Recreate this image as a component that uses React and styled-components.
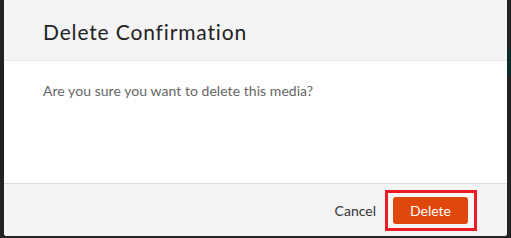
import React from "react";
import styled, { createGlobalStyle } from "styled-components";

const GlobalStyle = createGlobalStyle`
  html, body {
    margin: 0;
    padding: 0;
    background: #222222;
  }
  body {
    font-family: Lato, "Open Sans", sans-serif;
  }
`;

const Backdrop = styled.div`
  width: 511px;
  height: 238px;
  padding: 0 4px 2px 4px;
  box-sizing: border-box;
  background:
    linear-gradient(#0f2a2a, #0f2a2a) right 0 top 49px / 4px 26px no-repeat,
    #222222;
`;

const Modal = styled.div`
  display: flex;
  flex-direction: column;
  height: 236px;
  background: #ffffff;
  border-radius: 0 0 3px 3px;
  overflow: hidden;
`;

const Header = styled.div`
  display: flex;
  align-items: center;
  height: 60px;
  padding: 0 39px;
  background: #f4f4f4;
  border-bottom: 1px solid #e6e6e6;
  flex-shrink: 0;
`;

const Title = styled.h2`
  margin: 2px 0 0;
  font-size: 21px;
  font-weight: 400;
  color: #222222;
  letter-spacing: 0.85px;
`;

const Body = styled.div`
  flex: 1;
  padding: 21px 39px 0;
`;

const Message = styled.p`
  margin: 0;
  font-size: 14px;
  color: #666666;
  letter-spacing: 0.05px;
`;

const Footer = styled.div`
  display: flex;
  align-items: center;
  justify-content: flex-end;
  gap: 9px;
  height: 52px;
  padding: 0 30px 0 0;
  background: #f4f4f4;
  border-top: 1px solid #dcdcdc;
  flex-shrink: 0;
`;

const TextButton = styled.button`
  border: none;
  background: none;
  padding: 0;
  font-family: inherit;
  font-size: 14px;
  color: #333333;
  cursor: pointer;
`;

const Highlight = styled.div`
  display: flex;
  padding: 4px 6px 4px 5px;
  border: 3px solid #ed1c24;
  background: #f7f7f7;
`;

const PrimaryButton = styled.button`
  width: 75px;
  height: 27px;
  border: none;
  border-radius: 3px;
  background: #e0470b;
  color: #ffffff;
  font-family: inherit;
  font-size: 14px;
  cursor: pointer;
`;

export default function App() {
  return (
    <>
      <GlobalStyle />
      <Backdrop>
        <Modal>
          <Header>
            <Title>Delete Confirmation</Title>
          </Header>
          <Body>
            <Message>Are you sure you want to delete this media?</Message>
          </Body>
          <Footer>
            <TextButton>Cancel</TextButton>
            <Highlight>
              <PrimaryButton>Delete</PrimaryButton>
            </Highlight>
          </Footer>
        </Modal>
      </Backdrop>
    </>
  );
}
